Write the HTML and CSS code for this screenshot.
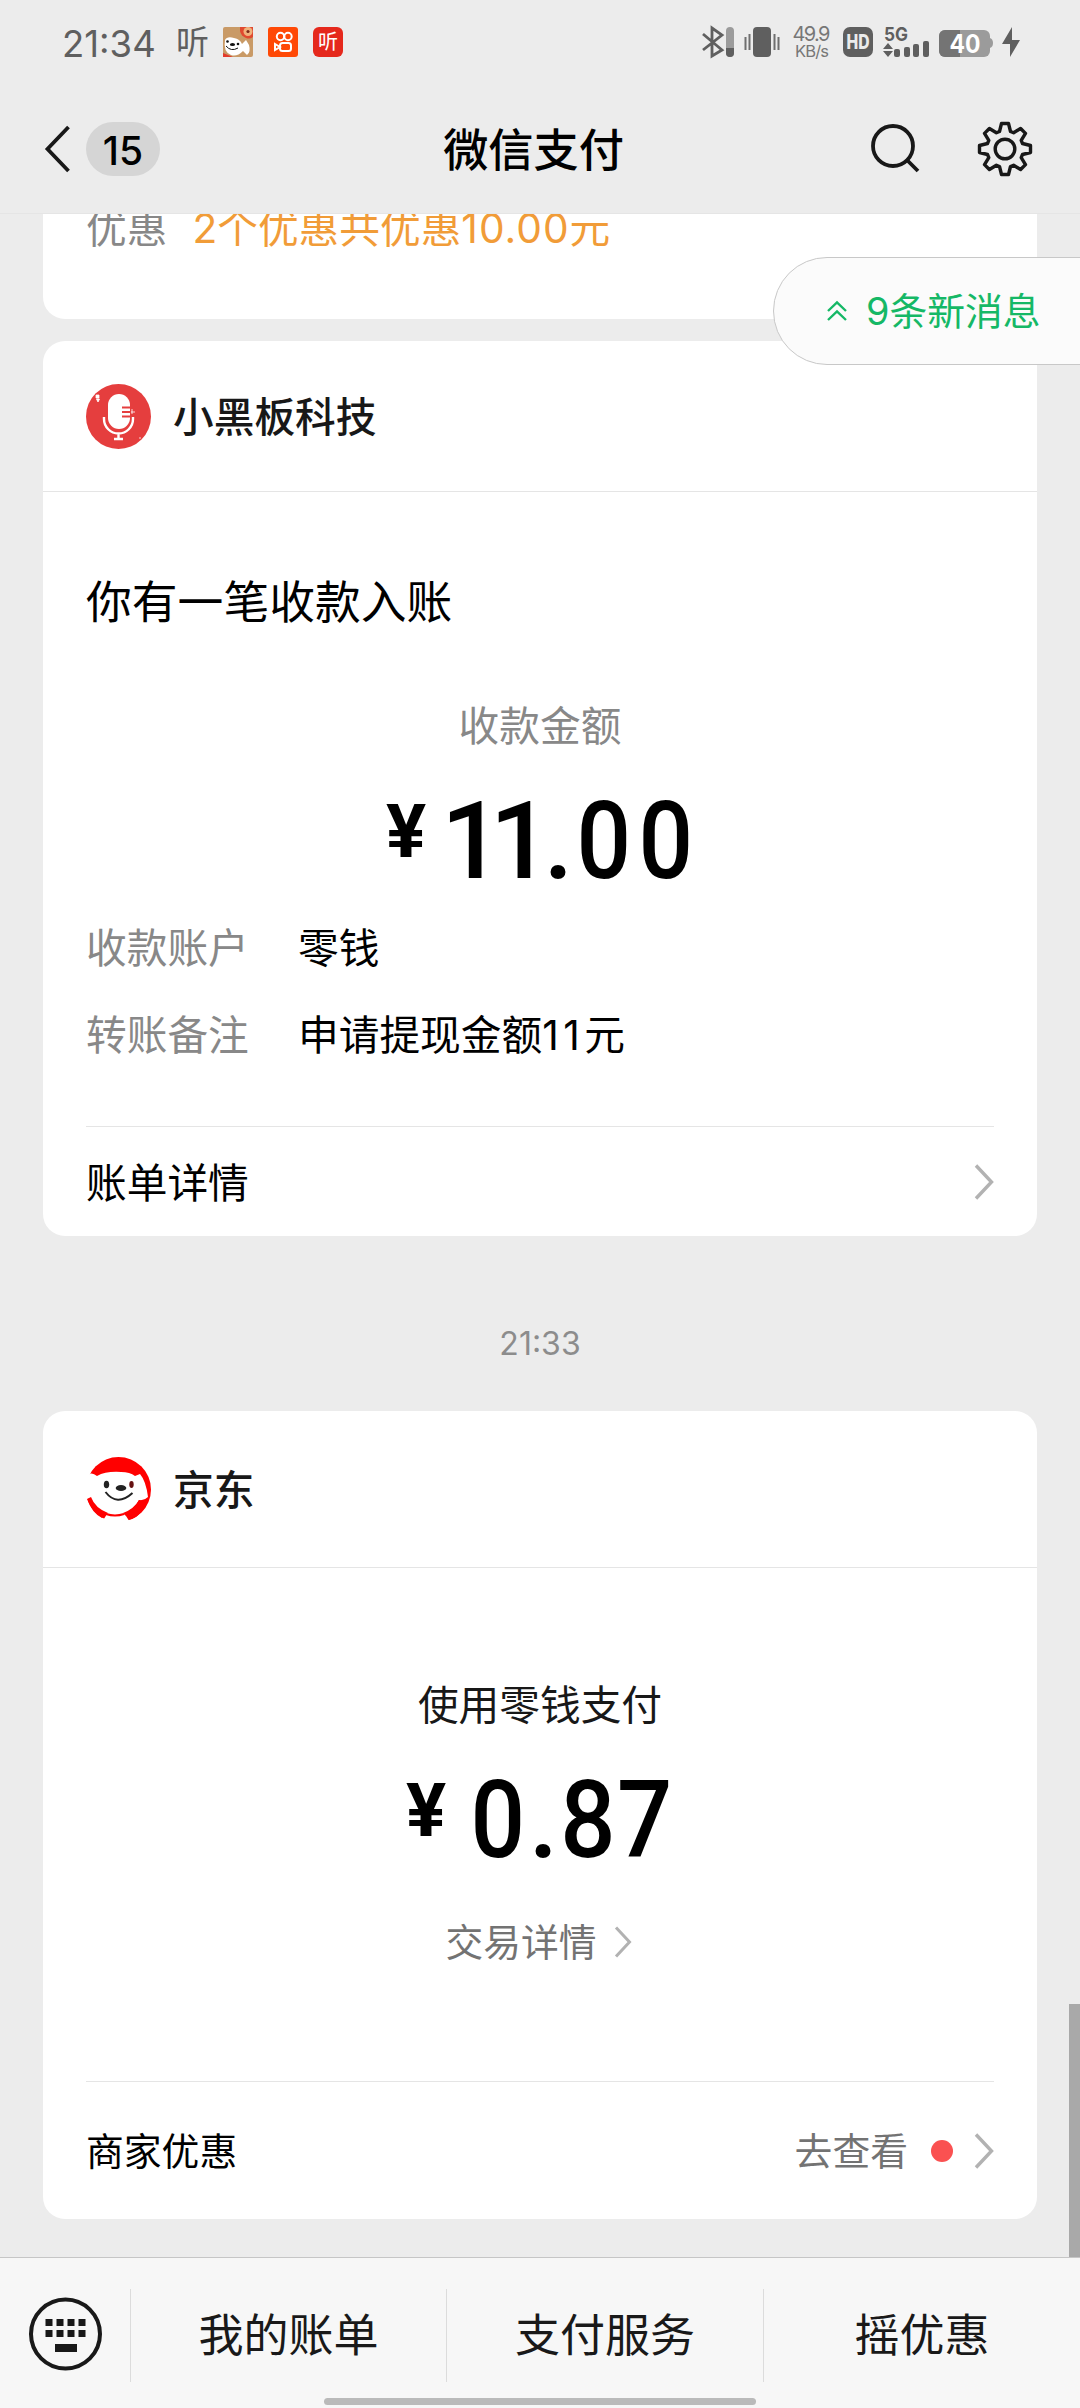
FILE: index.html
```html
<!DOCTYPE html>
<html lang="zh-CN">
<head>
<meta charset="utf-8">
<title>微信支付</title>
<link rel="stylesheet" href="styles.css">
</head>
<body>
<div class="screen">
  <header class="top">
    <div class="status">
      <span class="clock">21:34</span>
      <span class="listen">听</span>
      <svg class="app" viewBox="0 0 30 30">
        <rect width="30" height="30" rx="2" fill="#c99a66"/>
        <path d="M17 0H30V10Q27 12.500 23 11Q18 9 17 4Z" fill="#e0492f"/><circle cx="25" cy="4.500" r="4.500" fill="#f0b27c"/><circle cx="25" cy="4.500" r="1.600" fill="#7d2a1a"/>
        <path d="M0 30V26L5 28L10 30Z" fill="#e33a2c"/>
        <path d="M2 13Q4 9 11 11Q17 12 19 17L23 13L26 18Q28 25 24 28L20 24Q14 30 8 28Q0 25 2 13Z" fill="#fff"/>
        <circle cx="4.500" cy="14.500" r="1.300" fill="#111"/><circle cx="15" cy="17" r="1.300" fill="#111"/><ellipse cx="9.500" cy="17.500" rx="2.600" ry="1.600" fill="#111"/>
        <path d="M3 19Q8 25 15 21" fill="none" stroke="#111"/>
      </svg>
      <svg class="app" viewBox="0 0 30 30">
        <rect width="30" height="30" rx="3" fill="#ff4906"/>
        <g fill="none" stroke="#fff" stroke-width="2"><circle cx="12.500" cy="9.500" r="3.700"/><circle cx="20" cy="9.500" r="3.700"/><rect x="12" y="16" width="11" height="8" rx="2.500"/><path d="M12 20L7 17V23Z"/></g>
      </svg>
      <span class="app listen-app">听</span>
      <svg class="system" width="322" height="40" viewBox="700 22 322 40">
        <g fill="none" stroke="#5f5f5f" stroke-width="2.800"><path d="M703 34L722 50L712 56V28L722 35L703 50"/></g>
        <rect x="726" y="27" width="8" height="30" rx="4" fill="#9b9b9b"/><path d="M726 48H734V53A4 4 0 0 1 726 53Z" fill="#5f5f5f"/>
        <rect x="753" y="27" width="18" height="30" rx="4" fill="#5f5f5f"/>
        <path d="M745.500 37V50M749.500 34V50M774.500 34V50M778.500 37V50" stroke="#6f6f6f" stroke-width="2"/>
        <text x="811.500" y="41" class="rate" text-anchor="middle" textLength="38">49.9</text>
        <text x="812" y="56.500" class="rate unit" text-anchor="middle" textLength="34">KB/s</text>
        <rect x="843" y="27" width="30" height="30" rx="7" fill="#5f5f5f"/>
        <text x="858" y="49" class="hd" text-anchor="middle" textLength="23" lengthAdjust="spacingAndGlyphs">HD</text>
        <text x="884" y="41" class="net" textLength="24" lengthAdjust="spacingAndGlyphs">5G</text>
        <path d="M883 49L888 43L893 49ZM883 51L888 57L893 51Z" fill="#5f5f5f"/>
        <g fill="#5f5f5f"><rect x="894" y="49" width="6" height="8" rx="2"/><rect x="904" y="47" width="6" height="10" rx="2"/><rect x="913" y="44" width="6" height="13" rx="2"/><rect x="923" y="41" width="6" height="16" rx="2"/></g>
        <rect x="939" y="30" width="51" height="27" rx="6" fill="#9b9b9b"/><path d="M945 30H960V57H945A6 6 0 0 1 939 51V36A6 6 0 0 1 945 30Z" fill="#747474"/><path d="M990 38Q993 39 993 43Q993 47 990 48Z" fill="#9b9b9b"/>
        <text x="965" y="53" class="level" text-anchor="middle" textLength="31" lengthAdjust="spacingAndGlyphs">40</text>
        <path d="M1012 27L1002 44H1010L1010 57L1020 40H1012Z" fill="#5f5f5f"/>
      </svg>
    </div>
    <nav class="nav">
      <svg class="back" width="26" height="50" viewBox="0 0 26 50"><path d="M24.500 3L3.500 25L24.500 47" fill="none" stroke="#181818" stroke-width="3.800"/></svg>
      <span class="unread">15</span>
      <h1 class="title">微信支付</h1>
      <svg class="search" width="50" height="50" viewBox="0 0 50 50"><g fill="none" stroke="#181818" stroke-width="3.800"><circle cx="22" cy="22" r="20"/><path d="M36 36L47 47"/></g></svg>
      <svg class="gear" width="56" height="56" viewBox="-28 -28 56 56"><g fill="none" stroke="#181818" stroke-width="3.400" stroke-linejoin="round"><circle r="9.800"/><path d="M-3.500 -25.500H3.500L5.500 -17.500L8.600 -16.200L15.600 -20.500L20.500 -15.600L16.200 -8.600L17.500 -5.500L25.500 -3.500V3.500L17.500 5.500L16.200 8.600L20.500 15.600L15.600 20.500L8.600 16.200L5.500 17.500L3.500 25.500H-3.500L-5.500 17.500L-8.600 16.200L-15.600 20.500L-20.500 15.600L-16.200 8.600L-17.500 5.500L-25.500 3.500V-3.500L-17.500 -5.500L-16.200 -8.600L-20.500 -15.600L-15.600 -20.500L-8.600 -16.200L-5.500 -17.500Z"/></g></svg>
    </nav>
  </header>

  <main class="chat">
    <section class="card card-previous">
      <div class="row"><span class="label">优惠</span><span class="discount">2个优惠共优惠<span class="sum">10.00</span>元</span></div>
    </section>

    <section class="card card-income">
      <div class="card-head">
        <svg class="avatar" viewBox="0 0 65 65">
          <circle cx="32.500" cy="32.500" r="32.500" fill="#e53e3e"/>
          <rect x="22" y="10" width="22" height="35" rx="11" fill="#fff"/>
          <path d="M36 23.500H45M36 28H45M36 32.500H45" stroke="#e53e3e" stroke-width="2"/>
          <path d="M18 33V35A14.500 14.500 0 0 0 47 35V33M32.500 49V55M28 55H37" fill="none" stroke="#fff" stroke-width="2.400"/>
          <path d="M10 11H13V14H10ZM10.500 15H13.500L12 18ZM46 25V30M45 28H49M54 55V53" fill="#fff" stroke="#fff" stroke-width=".8"/>
        </svg>
        <h2 class="merchant">小黑板科技</h2>
      </div>
      <p class="headline">你有一笔收款入账</p>
      <p class="caption">收款金额</p>
      <p class="amount"><span class="yen">¥</span><span class="ones">11</span><span class="point">.</span><span class="zero">0</span><span class="zero">0</span></p>
      <div class="row"><span class="label wide">收款账户</span><span>零钱</span></div>
      <div class="row"><span class="label wide">转账备注</span><span>申请提现金额<span class="count">11</span>元</span></div>
      <div class="card-foot">
        <span class="foot-title">账单详情</span>
        <svg class="arrow" width="20" height="38" viewBox="0 0 20 38"><path d="M2 2.500L17.500 19L2 35.500" fill="none" stroke="#b2b2b2" stroke-width="3.400"/></svg>
      </div>
    </section>

    <time class="timestamp">21:33</time>

    <section class="card card-payment">
      <div class="card-head">
        <svg class="avatar" viewBox="0 0 65 65">
          <circle cx="32.500" cy="32.500" r="32.500" fill="#f00"/>
          <path d="M0 21Q4 13 11 19Q20 14 35 15Q44 15 49 19L54 17Q60 24 62 40Q58 44 53 43Q48 52 37 56L40 59Q42 63 45 65H16L21 57Q8 52 4 41L0 43Z" fill="#fff"/>
          <path d="M1 42L5 40Q9 51 22 56L16 61Q6 56 1 42Z" fill="#f00"/>
          <path d="M53 43Q49 52 38 57L46 62Q58 56 62 43Q57 44 53 43Z" fill="#f00"/>
          <path d="M20 57Q29 60 38 57" fill="none" stroke="#f00" stroke-width="2"/>
          <ellipse cx="20.500" cy="27.500" rx="2.700" ry="3.800" fill="#222"/><ellipse cx="45.500" cy="27.500" rx="2.200" ry="3.400" fill="#611"/><ellipse cx="35" cy="31" rx="5.300" ry="3" fill="#222"/>
          <path d="M19.500 35Q31 50 46.500 36" fill="none" stroke="#222" stroke-width="2"/>
        </svg>
        <h2 class="merchant">京东</h2>
      </div>
      <p class="caption dark">使用零钱支付</p>
      <p class="amount"><span class="yen">¥</span><span class="zero">0</span><span class="point">.</span><span class="cents">87</span></p>
      <p class="detail">交易详情<svg width="18" height="34" viewBox="0 0 18 34"><path d="M2 2.500L15.500 17L2 31.500" fill="none" stroke="#b2b2b2" stroke-width="3"/></svg></p>
      <div class="card-foot">
        <span>商家优惠</span>
        <span class="more">去查看</span>
        <i class="dot"></i>
        <svg class="arrow" width="20" height="38" viewBox="0 0 20 38"><path d="M2 2.500L17.500 19L2 35.500" fill="none" stroke="#b2b2b2" stroke-width="3.400"/></svg>
      </div>
    </section>

    <div class="new-messages">
      <svg width="20" height="22" viewBox="0 0 20 22"><path d="M1 11L10 2.500L19 11M1 20L10 11.500L19 20" fill="none" stroke="#15b866" stroke-width="2.400"/></svg>
      <span>9条新消息</span>
    </div>
    <div class="scrollbar"></div>
  </main>

  <footer class="menu">
    <div class="keyboard">
      <svg width="74" height="74" viewBox="0 0 74 74">
        <circle cx="37.500" cy="37" r="34.500" fill="none" stroke="#191919" stroke-width="4"/>
        <g fill="#191919"><path d="M17.500 22h7v7h-7zM28.500 22h7v7h-7zM39.500 22h7v7h-7zM50.500 22h7v7h-7zM17.500 33h7v7h-7zM28.500 33h7v7h-7zM39.500 33h7v7h-7zM50.500 33h7v7h-7zM27 47h22v8H27z"/></g>
      </svg>
    </div>
    <div class="menu-item">我的账单</div>
    <div class="menu-item">支付服务</div>
    <div class="menu-item">摇优惠</div>
    <div class="home-bar"></div>
  </footer>
</div>
</body>
</html>
```
FILE: styles.css
```css
* { box-sizing: border-box; }

body {
  margin: 0;
  background: #ececec;
  color: #000;
  font-family: Inter, "Noto Sans CJK SC", sans-serif;
  font-size: 40.700px;
  line-height: 54px;
}

h1, h2, p { margin: 0; font-weight: 500; }
svg { display: block; flex: none; }

.screen {
  width: 1080px;
  height: 2408px;
  display: flex;
  flex-direction: column;
  overflow: hidden;
}

/* Status bar and navigation */
.top { height: 214px; border-bottom: 1px solid #e5e5e5; }

.status {
  height: 84px;
  padding: 0 58px 0 62px;
  display: flex;
  align-items: center;
  color: #5f5f5f;
}
.clock { width: 114px; font-size: 36.500px; margin-top: 4px; }
.listen { width: 47px; font-size: 33px; }
.app { width: 30px; height: 30px; margin-right: 15px; }
.listen-app {
  background: #e5281c;
  border-radius: 6px;
  color: #fff;
  font-size: 20px;
  line-height: 30px;
  text-align: center;
}
.system { margin-left: auto; }
.rate { font: 20px Inter, sans-serif; fill: #777; }
.unit { font-size: 16.500px; }
.hd { font: 800 20px Inter, sans-serif; fill: #ececec; }
.net { font: 700 19px Inter, sans-serif; fill: #5f5f5f; }
.level { font: 700 25px Inter, sans-serif; fill: #fff; }

.nav {
  height: 130px;
  padding: 0 47px 0 44px;
  display: grid;
  grid-template-columns: 42px 74px 1fr 50px 56px 56px;
  align-items: center;
}
.unread {
  height: 54px;
  border-radius: 27px;
  background: #d5d5d5;
  font-size: 39px;
  font-weight: 500;
  line-height: 57px;
  text-align: center;
}
.title {
  padding: 3px 0 0 36px;
  font-size: 45.200px;
  text-align: center;
}
.gear { grid-column: 6; }

/* Conversation */
.chat {
  position: relative;
  flex: 1;
  padding: 0 43px;
  overflow: hidden;
}
.card {
  padding: 0 43px;
  background: #fff;
  border-radius: 22px;
}
.card-previous {
  height: 105px;
  margin-bottom: 22px;
  border-radius: 0 0 22px 22px;
}
.card-previous .row { margin-top: -12px; float: left; }

.card-head {
  margin: 0 -43px;
  padding: 0 43px;
  border-bottom: 1px solid #e5e5e5;
  display: flex;
  align-items: center;
  gap: 22px;
}
.card-income { height: 895px; }
.card-income .card-head { height: 151px; }
.card-payment { height: 808px; }
.card-payment .card-head { height: 157px; }
.avatar { width: 65px; height: 65px; }
.merchant { padding-top: 3px; font-size: 40.700px; color: #181818; }

.headline { margin-top: 84px; font-size: 45.800px; font-weight: 400; }
.caption { margin-top: 70px; color: #888; font-weight: 400; text-align: center; }
.caption.dark { margin-top: 111px; color: #181818; }

.amount {
  height: 108px;
  margin: 33px 0 27px;
  padding-left: 300px;
  display: flex;
  font: 500 108px/108px Roboto, sans-serif;
}
.yen {
  width: 46px;
  margin-right: 9px;
  font-size: 75px;
  font-weight: 700;
  line-height: 88px;
}
.ones { margin-right: 5px; letter-spacing: -12.700px; }
.zero { transform: scaleX(.89); }
.cents {
  margin-left: -4px;
  letter-spacing: 1.500px;
  transform: scaleX(.9);
}

.row { display: flex; margin-bottom: 33px; }
.label { color: #888; margin-right: 25px; }
.label.wide { width: 212px; margin-right: 0; }
.discount { color: #f19c38; }
.sum { letter-spacing: 1px; }
.count { letter-spacing: 4.500px; }

.card-foot {
  height: 110px;
  margin-top: 63px;
  border-top: 1px solid #e5e5e5;
  display: flex;
  align-items: center;
}
.foot-title { padding-top: 4px; }
.arrow { margin-left: auto; }

.timestamp {
  height: 175px;
  padding-top: 41px;
  display: flex;
  align-items: center;
  justify-content: center;
  color: #8c8c8c;
  font-size: 32px;
}
.card-payment .amount {
  margin: 33px 0 41px;
  padding-left: 320px;
}
.card-payment .yen { margin-right: 15px; }
.detail {
  padding-right: 3px;
  display: flex;
  align-items: center;
  justify-content: center;
  gap: 17px;
  color: #737373;
  font-size: 37.800px;
  font-weight: 400;
}
.card-payment .card-foot {
  height: 138px;
  margin-top: 112px;
  font-size: 37.800px;
}
.more { margin-left: auto; color: #737373; }
.dot {
  width: 22px;
  height: 22px;
  margin: 0 21px 0 23px;
  border-radius: 50%;
  background: #fa5151;
}
.card-payment .arrow { margin-left: 0; }

/* Floating over the conversation */
.new-messages {
  position: absolute;
  top: 43px;
  right: -1px;
  width: 308px;
  height: 108px;
  padding-left: 53px;
  border: 1px solid #c8c8c8;
  border-radius: 54px 0 0 54px;
  background: #fbfbfb;
  color: #15b866;
  display: flex;
  align-items: center;
  gap: 19px;
  font-size: 37.800px;
}
.scrollbar {
  position: absolute;
  right: 0;
  bottom: 0;
  width: 11px;
  height: 253px;
  background: #a9a9a9;
}

/* Bottom menu */
.menu {
  position: relative;
  height: 151px;
  padding: 31px 0 32px;
  border-top: 1px solid #c6c6c6;
  background: #f7f7f7;
  display: grid;
  grid-template-columns: 130px 316px 317px 317px;
}
.keyboard { padding: 8px 0 0 28px; }
.menu-item {
  border-left: 1px solid #dcdcdc;
  color: #191919;
  font-size: 45px;
  line-height: 93px;
  text-align: center;
}
.home-bar {
  position: absolute;
  left: 324px;
  bottom: 3px;
  width: 432px;
  height: 7px;
  border-radius: 4px;
  background: #bababa;
}
```
